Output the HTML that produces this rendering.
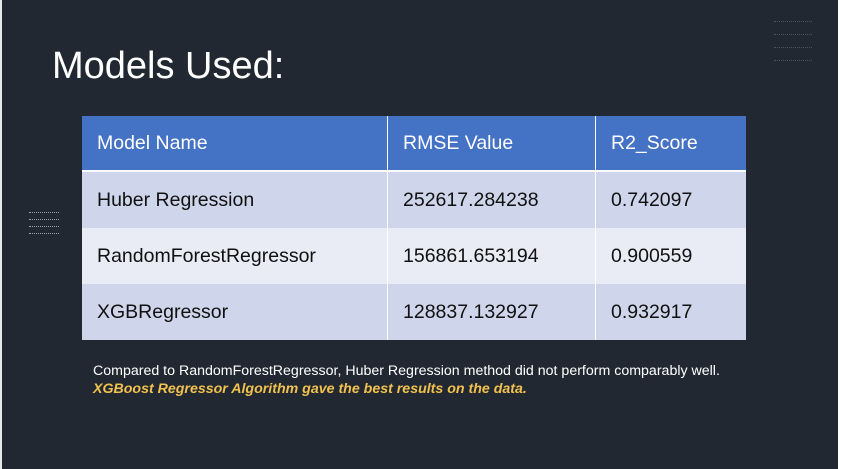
<!DOCTYPE html>
<html><head><style>
html,body{margin:0;padding:0}
body{width:841px;height:469px;background:#222831;position:relative;overflow:hidden;font-family:"Liberation Sans",sans-serif}
.edge{position:absolute;top:0;bottom:0;left:0;width:2px;background:#e8e8e8}
.redge{position:absolute;top:0;bottom:0;right:0;width:3px;background:#fff}
h1{position:absolute;left:52px;top:45px;margin:0;font-weight:normal;color:#fff;font-size:38px;letter-spacing:0px}
table{position:absolute;left:82px;top:116px;border-collapse:collapse;width:664px;font-size:19.5px}
td,th{padding:0 0 0 15px;text-align:left;font-weight:normal;height:56px;color:#111}
th{background:#4472C4;color:#fff;height:54px;border-bottom:2px solid #fff}
td+td,th+th{border-left:1px solid #fff}
tr.a td{background:#CFD5EA}
tr.b td{background:#E9EBF5}
.cap{position:absolute;left:93px;top:362px;color:#fff;font-size:14.2px;line-height:18px}
.cap i{color:#F2C14E;font-weight:bold}
.d{position:absolute;height:0;border-top:1px dotted #4a5260}
</style></head><body>
<div class="edge"></div><div class="redge"></div>
<div class="d" style="left:774px;top:21px;width:38px"></div>
<div class="d" style="left:774px;top:34px;width:38px"></div>
<div class="d" style="left:774px;top:47px;width:38px"></div>
<div class="d" style="left:774px;top:60px;width:38px"></div>
<div class="d" style="left:29px;top:212px;width:30px;border-color:#9aa2b0"></div>
<div class="d" style="left:29px;top:219px;width:30px;border-color:#9aa2b0"></div>
<div class="d" style="left:29px;top:226px;width:30px;border-color:#9aa2b0"></div>
<div class="d" style="left:29px;top:233px;width:30px;border-color:#9aa2b0"></div>
<h1>Models Used:</h1>
<table>
<tr><th style="width:290px">Model Name</th><th style="width:192px">RMSE Value</th><th>R2_Score</th></tr>
<tr class="a"><td>Huber Regression</td><td>252617.284238</td><td>0.742097</td></tr>
<tr class="b"><td>RandomForestRegressor</td><td>156861.653194</td><td>0.900559</td></tr>
<tr class="a"><td>XGBRegressor</td><td>128837.132927</td><td>0.932917</td></tr>
</table>
<div class="cap">Compared to RandomForestRegressor, Huber Regression method did not perform comparably well.<br><i>XGBoost Regressor Algorithm gave the best results on the data.</i></div>
</body></html>
